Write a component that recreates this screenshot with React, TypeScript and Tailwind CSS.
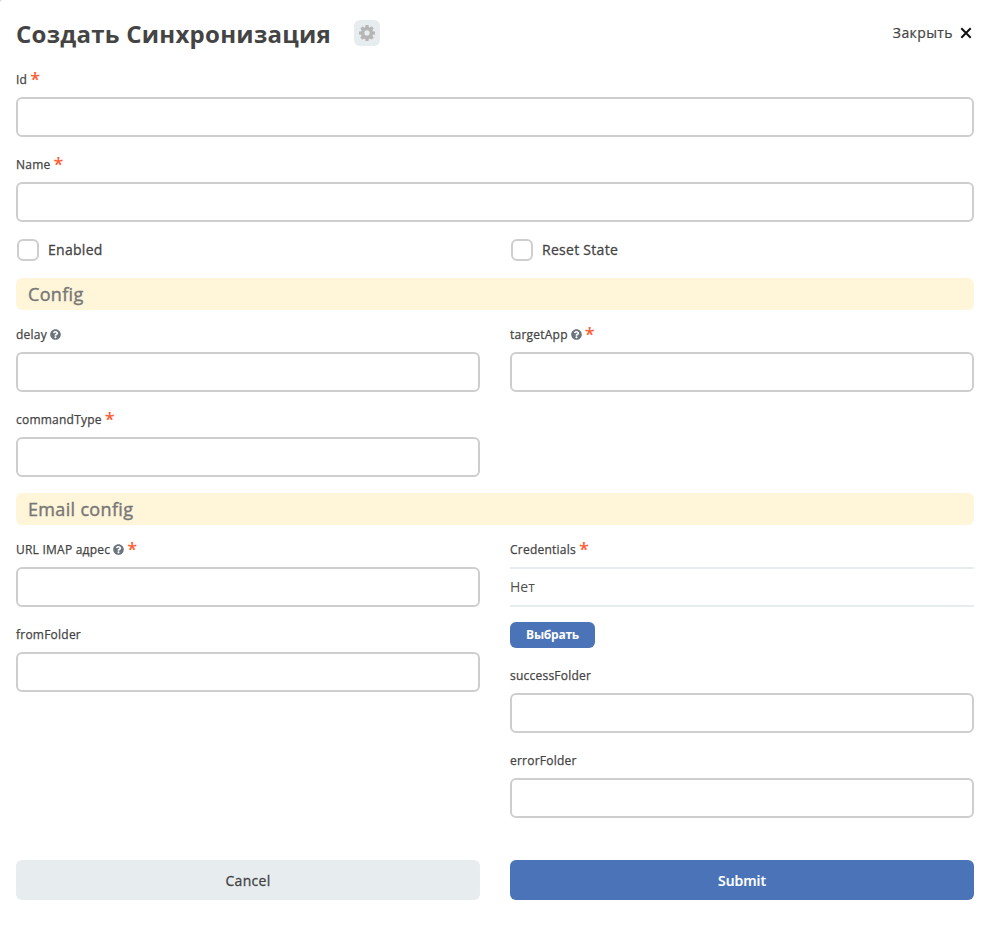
import type { ReactNode } from 'react';
import { FaQuestionCircle } from 'react-icons/fa';

function GearIcon() {
  return (
    <svg viewBox="0 0 1536 1536" className="size-4 fill-[#b5b5b5]" aria-hidden="true">
      <path d="M1024 768q0-106-75-181t-181-75-181 75-75 181 75 181 181 75 181-75 75-181zm512-109v222q0 12-8 23t-20 13l-185 28q-19 54-39 91 35 50 107 138 10 12 10 25t-9 23q-27 37-99 108t-94 71q-12 0-26-9l-138-108q-44 23-91 38-16 136-29 186-7 28-36 28H657q-14 0-24.500-8.500T621 1506l-28-184q-49-16-90-37l-141 107q-10 9-25 9-14 0-25-11-126-114-165-168-7-10-7-23 0-12 8-23 15-21 51-66.500t54-70.500q-27-50-41-99L29 913q-13-2-21-12.500T0 877V655q0-12 8-23t19-13l186-28q14-46 39-92-40-57-107-138-10-12-10-24 0-10 9-23 26-36 98.500-107.500T337 135q13 0 26 10l138 107q44-23 91-38 16-136 29-186 7-28 36-28h222q14 0 24.500 8.500T915 30l28 184q49 16 90 37l142-107q9-9 24-9 13 0 25 10 129 119 165 170 7 8 7 22 0 12-8 23-15 21-51 66.500t-54 70.500q26 50 41 98l183 28q13 2 21 12.500t8 23.500z" />
    </svg>
  );
}

function Field({ label, help, required, children }: { label: string; help?: boolean; required?: boolean; children?: ReactNode }) {
  return (
    <div className="mb-4">
      <label className="flex h-[29px] items-center pb-[5px] text-xs">
        <span className="tracking-[0.23px] [-webkit-text-stroke:0.25px]">{label}</span>
        {help && <FaQuestionCircle className="mb-px ml-[3px] size-[11px] text-[#6c757d]" />}
        {required && <span className="mb-[2px] ml-[3px] text-lg leading-none font-semibold text-[#ff5c33]">*</span>}
      </label>
      {children ?? <input className="block h-10 w-full rounded-md border-2 border-[#cecece] bg-white px-3 text-sm outline-none" />}
    </div>
  );
}

function Check({ label }: { label: string }) {
  return (
    <label className="mb-4 flex h-6 items-center pl-px text-sm tracking-[0.28px] [-webkit-text-stroke:0.3px]">
      <input type="checkbox" className="mr-[9px] size-[22px] appearance-none rounded-md border-2 border-[#cecece] bg-white" />
      {label}
    </label>
  );
}

function Section({ title }: { title: string }) {
  return (
    <h2 className="mb-[13px] flex h-8 items-center rounded-md bg-[#fff5d9] px-3 text-lg tracking-[0.33px] text-[#777] [-webkit-text-stroke:0.4px]">{title}</h2>
  );
}

export default function App() {
  return (
    <div className="bg-[#bbb]">
      <main className="h-[927px] rounded-tl-[2px] bg-white pr-[14px] pl-4 font-['Open_Sans','Noto_Sans',sans-serif] text-[#444]">
        <header className="flex h-[68px] items-center justify-between">
          <div className="flex items-center gap-6 pb-[2px]">
            <h1 className="pt-[2px] text-2xl font-bold tracking-[0.26px]">Создать Синхронизация</h1>
            <button className="-ml-px flex size-[26px] items-center justify-center rounded-md bg-[#e7ecef]">
              <GearIcon />
            </button>
          </div>
          <button className="flex items-center gap-[7px] pr-[2px] pb-[2px] text-sm tracking-[0.4px] [-webkit-text-stroke:0.2px]">
            Закрыть
            <svg viewBox="0 0 12 12" className="size-3 stroke-[#111] stroke-2" aria-hidden="true">
              <path d="M1.300 1.300 10.700 10.700M10.700 1.300 1.300 10.700" />
            </svg>
          </button>
        </header>

        <Field label="Id" required />
        <Field label="Name" required />
        <div className="grid grid-cols-2 gap-x-[30px]">
          <Check label="Enabled" />
          <Check label="Reset State" />
        </div>

        <Section title="Config" />
        <div className="grid grid-cols-2 gap-x-[30px]">
          <Field label="delay" help />
          <Field label="targetApp" help required />
          <Field label="commandType" required />
        </div>

        <Section title="Email config" />
        <div className="grid grid-cols-2 gap-x-[30px]">
          <div>
            <Field label="URL IMAP адрес" help required />
            <Field label="fromFolder" />
          </div>
          <div>
            <Field label="Credentials" required>
              <div className="flex h-10 items-center border-y-2 border-[#e7ecef] text-sm text-[#505050]">Нет</div>
              <button className="mt-[15px] flex h-[26px] w-[85px] items-center justify-center rounded-md bg-[#4b73b7] text-xs font-bold tracking-[-0.25px] text-white">
                Выбрать
              </button>
            </Field>
            <Field label="successFolder" />
            <Field label="errorFolder" />
          </div>
        </div>

        <footer className="mt-[26px] grid grid-cols-2 gap-x-[30px] text-sm">
          <button className="h-10 rounded-md bg-[#e7ecef] pt-[2px] tracking-[0.28px] [-webkit-text-stroke:0.3px]">Cancel</button>
          <button className="h-10 rounded-md bg-[#4b73b7] pt-[2px] font-semibold text-white [-webkit-text-stroke:0.2px]">Submit</button>
        </footer>
      </main>
    </div>
  );
}
